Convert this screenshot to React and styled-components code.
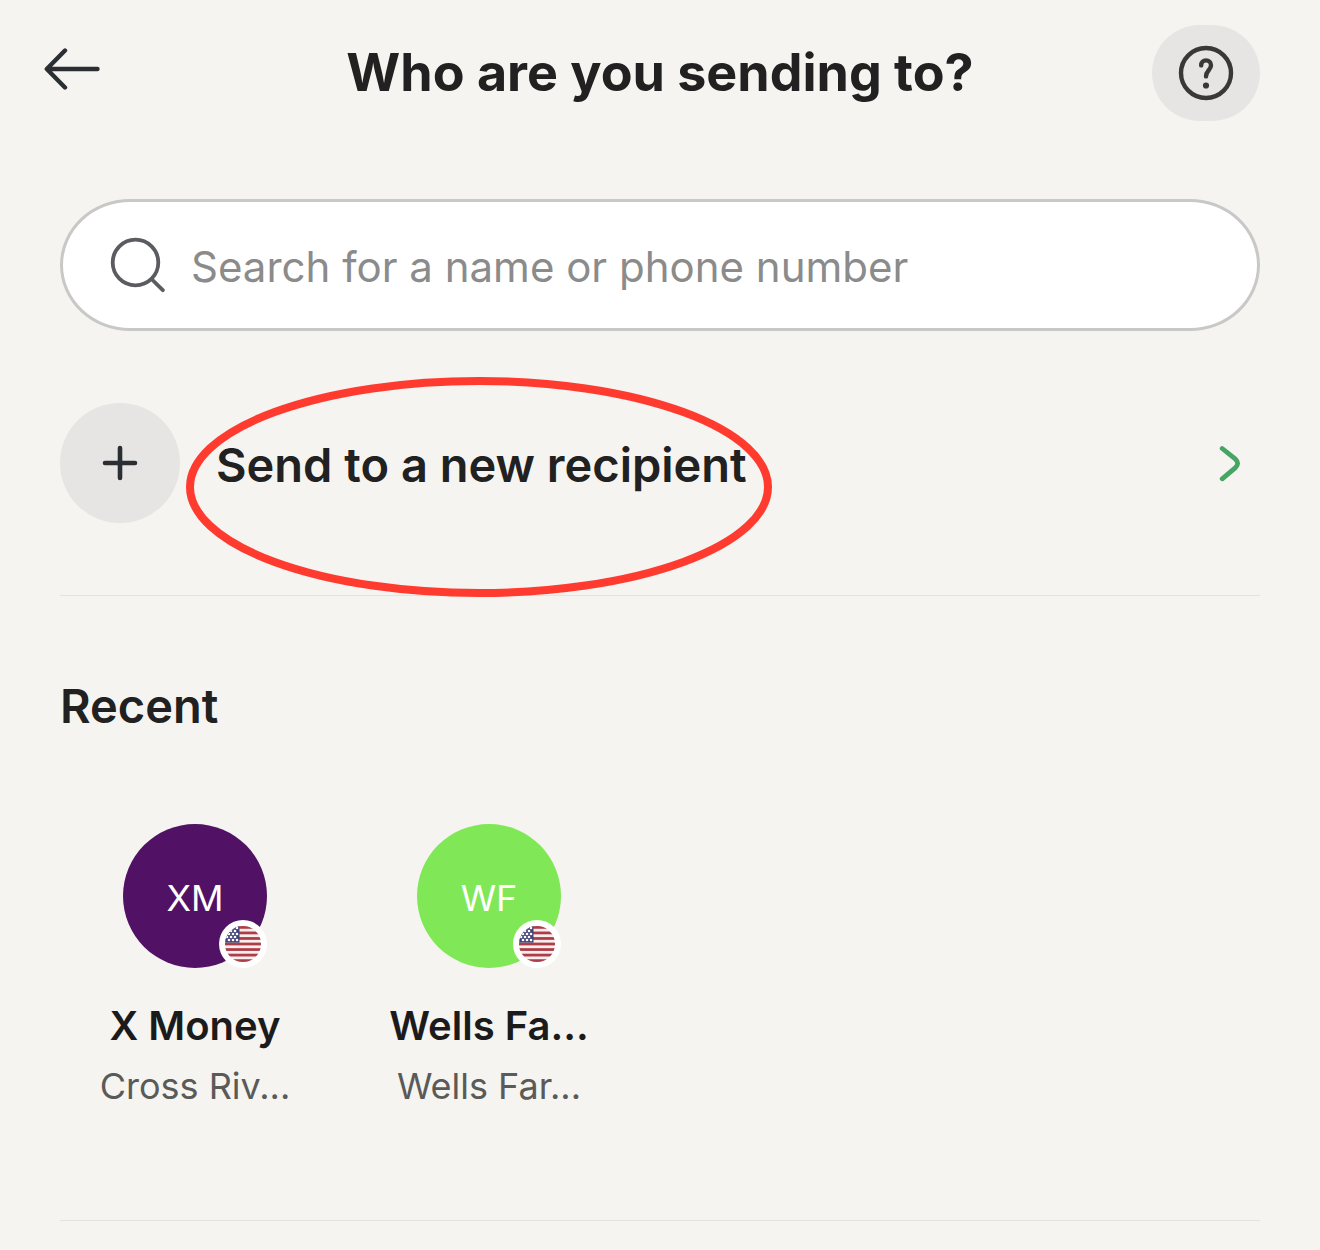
import React from "react";
import styled, { createGlobalStyle } from "styled-components";

const recents = [
	{ initials: "XM", name: "X Money", bank: "Cross Riv...", color: "#511164" },
	{ initials: "WF", name: "Wells Fa...", bank: "Wells Far...", color: "#80e856" },
];

const stripes = [0, 1, 2, 3, 4, 5, 6];
const stars = [
	[8, 2], [12, 2],
	[6, 5], [10, 5],
	[4, 8], [8, 8], [12, 8],
	[2, 11], [6, 11], [10, 11],
	[4, 14], [8, 14], [12, 14],
];

const UsFlag = ({ id }) => (
	<svg width="36" height="36" viewBox="0 0 36 36" role="img" aria-label="United States">
		<clipPath id={id}>
			<circle cx="18" cy="18" r="18" />
		</clipPath>
		<g clipPath={`url(#${id})`}>
			<rect width="36" height="36" fill="#f8eeee" />
			{stripes.map((s) => (
				<rect key={s} y={s * 5.54} width="36" height="2.77" fill="#ad3d48" />
			))}
			<rect width="14.5" height="16.6" fill="#414479" />
			{stars.map(([x, y]) => (
				<circle key={`${x}-${y}`} cx={x} cy={y} r="1.3" fill="#fff" />
			))}
		</g>
	</svg>
);

const App = () => {
	const [query, setQuery] = React.useState("");

	return (
		<Page>
			<GlobalStyle />
			<Header>
				<BackButton aria-label="Back">
					<svg width="56" height="42" viewBox="0 0 56 42" fill="none" stroke="#2b2e33" strokeWidth="4.4" strokeLinecap="round" strokeLinejoin="round">
						<path d="M53.5 21H3M21 2.5L2.8 21L21 39.5" />
					</svg>
				</BackButton>
				<Title>Who are you sending to?</Title>
				<HelpButton aria-label="Help">
					<svg width="56" height="56" viewBox="0 0 56 56" fill="none" stroke="#383838" strokeWidth="4.4" strokeLinecap="round">
						<circle cx="28" cy="28" r="25" />
						<path d="M23.2 20.4C23.2 17.4 25.1 15.4 28 15.4C31 15.4 33 17.4 33 20.2C33 25 28 25.6 28 31.4" />
						<circle cx="28" cy="40.5" r="3.1" fill="#383838" stroke="none" />
					</svg>
				</HelpButton>
			</Header>

			<SearchBox>
				<svg width="56" height="56" viewBox="0 0 56 56" fill="none" stroke="#5b5c60" strokeWidth="3.8" strokeLinecap="round">
					<circle cx="26.5" cy="25.5" r="22.8" />
					<path d="M43 42.5L53.8 53.2" />
				</svg>
				<SearchInput
					aria-label="Search recipients"
					placeholder="Search for a name or phone number"
					value={query}
					onChange={(e) => setQuery(e.target.value)}
				/>
			</SearchBox>

			<NewRecipient>
				<RecipientButton>
					<PlusCircle>
						<svg width="36" height="36" viewBox="0 0 36 36" stroke="#2b2e33" strokeWidth="4.6" strokeLinecap="round">
							<path d="M18 3V33M3 18H33" />
						</svg>
					</PlusCircle>
					<RecipientLabel>Send to a new recipient</RecipientLabel>
					<svg width="24" height="38" viewBox="0 0 24 38" fill="none" stroke="#45a564" strokeWidth="4.8" strokeLinecap="round" strokeLinejoin="round">
						<path d="M4.2 4.5L17.5 15.2Q21.8 19.3 17.5 23.6L4.2 34.8" />
					</svg>
				</RecipientButton>
				<Highlight viewBox="0 0 586 220" aria-hidden="true">
					<ellipse cx="293" cy="110" rx="289" ry="106" fill="none" stroke="#ff3b30" strokeWidth="8" />
				</Highlight>
			</NewRecipient>

			<RecentSection>
				<SectionTitle>Recent</SectionTitle>
				<RecentList>
					{recents.map((r) => (
						<li key={r.initials}>
							<Contact>
								<Avatar $color={r.color}>
									{r.initials}
									<Badge>
										<UsFlag id={`flag-${r.initials}`} />
									</Badge>
								</Avatar>
								<Name>{r.name}</Name>
								<Bank>{r.bank}</Bank>
							</Contact>
						</li>
					))}
				</RecentList>
			</RecentSection>
		</Page>
	);
};

const GlobalStyle = createGlobalStyle`
	* {
		box-sizing: border-box;
	}
	body {
		margin: 0;
		background-color: #f5f4f0;
		color: #212121;
		font-family: Inter, "Liberation Sans", sans-serif;
	}
	button {
		padding: 0;
		border: 0;
		background: none;
		color: inherit;
		font: inherit;
		cursor: pointer;
	}
	svg {
		display: block;
		flex-shrink: 0;
	}
`;

const Page = styled.main`
	padding: 25px 60px 28px;
`;

const Header = styled.header`
	display: grid;
	grid-template-columns: 1fr auto 1fr;
	align-items: center;
`;

const BackButton = styled.button`
	justify-self: start;
	margin-left: -16px;
	padding-bottom: 8px;
`;

const Title = styled.h1`
	margin: 0;
	font-size: 52px;
	line-height: 64px;
	font-weight: 700;
`;

const HelpButton = styled.button`
	display: flex;
	align-items: center;
	justify-content: center;
	justify-self: end;
	width: 108px;
	height: 96px;
	border-radius: 48px;
	background-color: #e6e5e3;
`;

const SearchBox = styled.div`
	display: flex;
	align-items: center;
	gap: 26px;
	height: 132px;
	margin-top: 78px;
	padding: 0 48px 0 46px;
	border: 3px solid #c8c8c7;
	border-radius: 70px / 66px;
	background-color: #fff;
`;

const SearchInput = styled.input`
	flex: 1;
	min-width: 0;
	padding: 4px 0 0;
	border: 0;
	outline: 0;
	background: none;
	color: #212121;
	font-family: inherit;
	font-size: 42px;
	line-height: 56px;

	&::placeholder {
		color: #8b8b8b;
		opacity: 1;
	}
`;

const NewRecipient = styled.section`
	position: relative;
	padding: 72px 0;
	border-bottom: 1px solid #e4e3e0;
`;

const RecipientButton = styled.button`
	display: flex;
	align-items: center;
	width: 100%;
	padding-right: 18px;
	text-align: left;
`;

const PlusCircle = styled.span`
	display: flex;
	align-items: center;
	justify-content: center;
	width: 120px;
	height: 120px;
	border-radius: 50%;
	background-color: #e6e5e3;
`;

const RecipientLabel = styled.span`
	flex: 1;
	padding: 4px 0 0 36px;
	font-size: 47px;
	line-height: 56px;
	font-weight: 600;
`;

// hand-drawn style ring laid over the row
const Highlight = styled.svg`
	position: absolute;
	top: 46px;
	left: 126px;
	width: 586px;
	height: 220px;
	pointer-events: none;
`;

const RecentSection = styled.section`
	padding: 82px 0 110px;
	border-bottom: 1px solid #e4e3e0;
`;

const SectionTitle = styled.h2`
	margin: 0;
	font-size: 47px;
	line-height: 56px;
	font-weight: 600;
`;

const RecentList = styled.ul`
	display: flex;
	gap: 24px;
	margin: 90px 0 0;
	padding: 0;
	list-style: none;
`;

const Contact = styled.button`
	display: flex;
	flex-direction: column;
	align-items: center;
	width: 270px;
`;

const Avatar = styled.span`
	position: relative;
	display: flex;
	align-items: center;
	justify-content: center;
	width: 144px;
	height: 144px;
	padding-top: 4px;
	border-radius: 50%;
	background-color: ${(props) => props.$color};
	color: #fff;
	font-size: 36px;
`;

const Badge = styled.span`
	position: absolute;
	right: 0;
	bottom: 0;
	padding: 6px;
	border-radius: 50%;
	background-color: #fff;
`;

const Name = styled.span`
	margin-top: 30px;
	color: #1b1b1b;
	font-size: 40px;
	line-height: 56px;
	font-weight: 600;
`;

const Bank = styled.span`
	margin-top: 8px;
	color: #5a5a58;
	font-size: 36px;
	line-height: 48px;
`;

export default App;
